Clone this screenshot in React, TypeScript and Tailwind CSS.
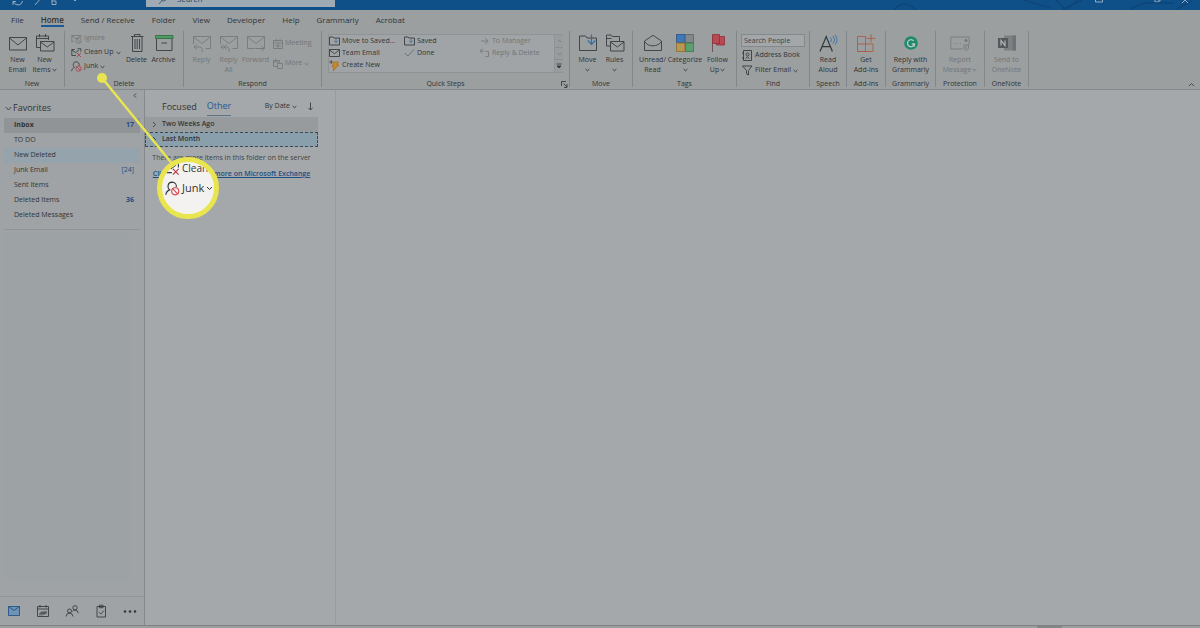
import { ReactNode } from "react";
import clsx from "clsx";

const INK = "#34383a";
const FAINT = "#747879";
const BLUE = "#1c4f84";
const RED = "#b3353f";

interface IconProps {
  w?: number;
  h?: number;
  color?: string;
  children: ReactNode;
}

function Icon({ w = 20, h = 20, color = INK, children }: IconProps) {
  return (
    <svg
      width={w}
      height={h}
      viewBox={`0 0 ${w} ${h}`}
      fill="none"
      stroke={color}
      strokeWidth={0.85}
      className="shrink-0"
      aria-hidden="true"
    >
      {children}
    </svg>
  );
}

function Caret() {
  return (
    <svg width="5" height="4" viewBox="0 0 5 4" fill="none" stroke="currentColor" strokeWidth="0.9" className="inline-block shrink-0" aria-hidden="true">
      <path d="M0.6 1 2.5 2.8 4.4 1" />
    </svg>
  );
}

const NewMail = () => (
  <Icon>
    <path d="M1.500 3.500h17v12.500h-17zM1.500 4 10 11l8.500-7" />
  </Icon>
);

const NewItems = () => (
  <Icon>
    <path d="M5.500 13.500h-4v-11.500h12v4M1.500 4.500h12M4.500 0v3M10.500 0v3M5.500 7.500h13.500v9.500h-13.500zM5.500 8l6.800 5 6.700-5" />
  </Icon>
);

const Trash = () => (
  <Icon>
    <path d="M4 2.500h12.500M7.500 2.500v-2h5.500v2M5.500 2.500v15h9.500v-15M8 5v10M10.200 5v10M12.500 5v10" />
  </Icon>
);

const ArchiveIcon = () => (
  <Icon>
    <path d="M2.500 5v11.500h15.500v-11.500M7.500 9h5.500" />
    <path d="M1.500 1.500h17.500v3h-17.500z" fill="#4f9a62" stroke="#2f6b45" />
  </Icon>
);

// Arrow count: 1 = reply, 2 = reply all, -1 = forward
function ReplyIcon({ arrows }: { arrows: number }) {
  return (
    <Icon color={FAINT}>
      <path d="M1.500 10v-7.500h17v12h-5M1.500 3 10 9.500 18.500 3" />
      {arrows === -1 ? (
        <path d="M1.500 10v4.500h8M10 14.500h8M15.500 12l2.800 2.500-2.800 2.700" />
      ) : (
        <path d="M4.500 10.500 2 13l2.500 2.500M2 13h6q2.500.2 2.200 5" />
      )}
      {arrows === 2 && <path d="M7.500 10.500 5 13l2.500 2.500" />}
    </Icon>
  );
}

const CalendarIcon = ({ arrow = false }: { arrow?: boolean }) => (
  <Icon w={10} h={10} color={FAINT}>
    {arrow ? (
      <path d="M4 7.500H.5v-6h6v2M.5 3h6M2.500 0v2M4.500 4.500h5v5h-5z" />
    ) : (
      <path d="M.5 1.500h9v8h-9zM.5 4h9M3 0v2.500M7 0v2.500M5 4v5.500M2 6.800h6" />
    )}
  </Icon>
);

const IgnoreIcon = () => (
  <Icon w={11} h={10} color={FAINT}>
    <path d="M3 7.500H.8V1.500h9v2.500M.8 2l4.200 2.800L9.500 2" />
    <circle cx="7.500" cy="6.800" r="2.600" />
    <path d="m5.700 5 3.600 3.600" />
  </Icon>
);

const CleanUpIcon = ({ size = 11 }: { size?: number }) => (
  <svg width={size} height={size} viewBox="0 0 11 11" fill="none" stroke={INK} strokeWidth="0.800" className="shrink-0" aria-hidden="true">
    <path d="M5 8.500H.8V2.500h3M.8 3l3.700 2.600L8 3M6.500 1.700h3.300v3" />
    <path d="m5.800 5.800 4.200 4.200m0-4.200L5.800 10" stroke={RED} />
  </svg>
);

const JunkIcon = ({ size = 11, red = RED }: { size?: number; red?: string }) => (
  <svg width={size} height={size} viewBox="0 0 11 11" fill="none" stroke={INK} strokeWidth="0.800" className="shrink-0" aria-hidden="true">
    <path d="M.6 10.200c.2-2 1.300-3.200 2.900-3.700C1.300 4.700 2 .9 5 .8c2.500 0 3.800 2 3.200 3.800" />
    <circle cx="7.500" cy="7.600" r="2.600" stroke={red} />
    <path d="m5.700 5.800 3.600 3.600" stroke={red} />
  </svg>
);

const FolderStep = () => (
  <Icon w={11} h={10}>
    <path d="M.5 1h3.500l1 1h5.500v7h-10z" />
    <path d="M7 2.500v4M5 4.700l2 2 2-2" stroke="#3f6f9c" />
  </Icon>
);

const MailStep = () => (
  <Icon w={11} h={10}>
    <path d="M.5 1.500h10v7h-10zM.5 2l5 3.700L10.500 2" />
  </Icon>
);

const BoltStep = () => (
  <Icon w={11} h={12}>
    <path d="M5 2h4.500L7.500 5H10L4 11l1.200-4.200H2.800z" fill="#c98a2c" stroke="#a1661a" strokeWidth="0.600" />
    <path d="M2.200 0v4M.2 2h4" stroke="#5c4526" />
  </Icon>
);

const CheckStep = () => (
  <Icon w={11} h={10} color="#55715f">
    <path d="m.8 5 3 3L10 1.500" />
  </Icon>
);

const ForwardStep = () => (
  <Icon w={11} h={10} color={FAINT}>
    <path d="M2 5h7M6 1.800 9.200 5 6 8.200" />
  </Icon>
);

const ReplyStep = () => (
  <Icon w={11} h={10} color={FAINT}>
    <path d="M3.500.8 1 3l2.500 2.300M1 3h4M6.500 3.500h3v5h-3" />
  </Icon>
);

const MoveIcon = () => (
  <Icon>
    <path d="M1.500 16.500V2h6l1.500 2h9.500v12.500z" />
    <path d="M13.500.5v9.500M9.800 6.500l3.700 3.800 3.800-3.800" stroke="#2f6da8" strokeWidth="1.200" />
  </Icon>
);

const RulesIcon = () => (
  <Icon>
    <path d="M5.500 12h-4V1h4.500l1.200 1.500h7.300v4.500M1.500 4.500h5" />
    <path d="M5.500 7.500h13.500v9.500h-13.500zM5.500 8l6.800 5 6.700-5" />
  </Icon>
);

const OpenMail = () => (
  <Icon>
    <path d="M1.500 7 10 1.300l8.500 5.700v9.500h-17zM1.500 7.500c2 3 5 4.300 8.500 4.300s6.500-1.300 8.500-4.300" />
  </Icon>
);

const CategorizeIcon = () => (
  <Icon>
    <path d="M1.500.5h8.500v8h-8.500z" fill="#3f78b4" stroke="#2c5688" />
    <path d="M10.500.5h8v8h-8z" fill="#83898b" stroke="#5f6567" />
    <path d="M1.500 9h8.500v8.500h-8.500z" fill="#b89653" stroke="#8f6f30" />
    <path d="M10.500 9h8v8.500h-8z" fill="#5da070" stroke="#3b7a50" />
  </Icon>
);

const FlagIcon = () => (
  <Icon>
    <path d="M4.500 1v17" stroke="#6c4448" />
    <path d="M4.500.5h7v9h-7z" fill="#b64a54" stroke="#92313c" />
    <path d="M11.500 2.500h5v8.500h-8v-1.500h3z" fill="#b64a54" stroke="#92313c" />
  </Icon>
);

const ReadAloud = () => (
  <Icon>
    <path d="m2 17.500 6.200-15 6.200 15M4 12.700h8.400" strokeWidth="1.200" />
    <path d="M12.500 3.500q2 2.200 0 4.600M14.800 2q3.400 3.800 0 7.600M17 .8q4.200 5 0 10" stroke="#2f6da8" />
  </Icon>
);

const AddinsIcon = () => (
  <Icon color="#ad5a3c">
    <path d="M1.500 2.500h8v15h-8zM1.500 10h15.500v7.500h-15.500M15 0v8.500M10.500 4.300h9" />
  </Icon>
);

const GrammarlyIcon = () => (
  <Icon>
    <circle cx="10" cy="9" r="6.800" fill="#1d8a6c" stroke="none" />
    <path d="M12.700 7A3.500 3.500 0 1 0 13.400 10h-2.600M13.400 9.500v3" stroke="#b8c9c4" strokeWidth="1.300" />
  </Icon>
);

const ReportIcon = () => (
  <Icon color={FAINT}>
    <path d="M13 15H.8V3h18.400v8" />
    <circle cx="16" cy="6.500" r="1.200" fill={FAINT} />
    <path d="M14 11h4.500v3q-.5 2-2.200 2.800-1.800-.8-2.300-2.800zM16.200 12v3" />
    <path d="M4 9.500h7" strokeDasharray="1 1" strokeWidth="0.600" />
  </Icon>
);

const OneNoteIcon = () => (
  <Icon>
    <path d="M7 1.500h12v15H7z" fill="#7c8082" stroke="none" />
    <path d="M15.500 1.500h3.500v15h-3.500z" fill="#6e7274" stroke="none" />
    <path d="M1 4h10v10H1z" fill="#54585a" stroke="none" />
    <path d="M4 11.500v-5l4 5v-5" stroke="#b4b8ba" strokeWidth="1.200" />
  </Icon>
);

interface GroupProps {
  title: string;
  className: string;
  children: ReactNode;
  launcher?: boolean;
}

function Group({ title, className, children, launcher = false }: GroupProps) {
  return (
    <section className={clsx("flex shrink-0 flex-col pt-[3px]", className)} aria-label={title}>
      <div className="flex flex-1 items-start">{children}</div>
      <div className="relative h-[10px] text-center leading-[14px]">
        {title}
        {launcher && (
          <button className="absolute right-px top-[4px]" aria-label={`${title} settings`}>
            <Icon w={7} h={7}>
              <path d="M.5 5V.5H5M2.500 2.500 6 6M6 3v3.500H3" />
            </Icon>
          </button>
        )}
      </div>
    </section>
  );
}

interface BigButtonProps {
  icon: ReactNode;
  lines: string[];
  caret?: boolean;
  disabled?: boolean;
  wide?: boolean;
}

function BigButton({ icon, lines, caret = false, disabled = false, wide = false }: BigButtonProps) {
  return (
    <button
      disabled={disabled}
      className={clsx(
        "flex shrink-0 flex-col items-center whitespace-nowrap leading-[10px]",
        wide ? "w-[38px]" : "w-[27px]",
        disabled && "text-[#717577]"
      )}
    >
      {icon}
      <span className="mt-px">{lines[0]}</span>
      <span className="flex h-[10px] items-center gap-px">
        {lines[1]}
        {caret && <Caret />}
      </span>
    </button>
  );
}

interface SmallButtonProps {
  icon: ReactNode;
  label: string;
  caret?: boolean;
  disabled?: boolean;
}

function SmallButton({ icon, label, caret = false, disabled = false }: SmallButtonProps) {
  return (
    <button
      disabled={disabled}
      className={clsx("flex h-[13px] items-center gap-[2px] whitespace-nowrap", disabled && "text-[#717577]")}
    >
      {icon}
      <span>{label}</span>
      {caret && <Caret />}
    </button>
  );
}

function TitleBar() {
  return (
    <header className="relative flex h-[10px] shrink-0 flex-col justify-end overflow-hidden bg-[#0f5088]">
      <svg className="absolute right-0 top-0" width="320" height="10" viewBox="0 0 320 10" fill="none" stroke="#0e467a" strokeWidth="1.500" aria-hidden="true">
        <path d="M14 10q10-12 22 0M144 0l26 8M176 0l10 10 12-10M202 0l-20 10M250 9l14-6h30M296 9l16-8" />
      </svg>
      <div className="flex h-[19px] shrink-0 items-start">
        <div className="flex w-[146px] items-center gap-[6px] pl-[11px]">
          <Icon w={14} h={16} color="#aebdc9">
            <path d="M2 10.500q2 4 6 3.500 3-.8 3.500-4M2 14v-3.500h3" />
          </Icon>
          <Icon w={12} h={16} color="#aebdc9">
            <path d="m4 14 7-8" />
          </Icon>
          <Icon w={12} h={16} color="#aebdc9">
            <path d="M3 9v4.500h4V10H3" />
          </Icon>
          <Icon w={12} h={16} color="#aebdc9">
            <path d="m6 8 2 2 2-2" />
          </Icon>
        </div>
        <label className="flex h-[16px] w-[189px] items-center bg-[#9fabb4]">
          <span className="flex w-[31px] justify-center">
            <Icon w={8} h={12} color="#35556f">
              <path d="m1 11 3-3.500" />
              <circle cx="5.500" cy="5.500" r="2.500" />
            </Icon>
          </span>
          <input aria-label="Search" placeholder="Search" className="w-[140px] bg-transparent text-[8px] leading-[12px] outline-none placeholder:text-[#24425c]" />
        </label>
        <div className="ml-auto flex h-[16px] items-center gap-[50px] pr-[39px]">
          <Icon w={8} h={16} color="#aebdc9">
            <path d="M.5 5v6h7V5M.5 8h7" />
          </Icon>
          <Icon w={8} h={16} color="#aebdc9">
            <path d="M2 5v6h4V5M6 9h2" />
          </Icon>
        </div>
      </div>
      <span className="absolute right-[11px] top-0">
        <Icon w={8} h={4} color="#aebdc9">
          <path d="m1 3 3-3 3 3" />
        </Icon>
      </span>
    </header>
  );
}

const TABS = ["File", "Home", "Send / Receive", "Folder", "View", "Developer", "Help", "Grammarly", "Acrobat"];

function Tabs() {
  return (
    <nav className="flex h-[20px] shrink-0 gap-[17px] bg-[#9b9fa0] pl-[11px] text-[8px] leading-[16px]">
      {TABS.map(tab => (
        <button
          key={tab}
          className={clsx("h-[17px] whitespace-nowrap pt-[2px]", tab === "Home" && "border-b-2 border-[#1c5a96] font-semibold")}
        >
          {tab}
        </button>
      ))}
    </nav>
  );
}

function QuickSteps() {
  return (
    <div className="ml-[6px] flex h-[39px] w-[235px] border border-[#8f9395] bg-[#a0a4a6]">
      <div className="grid flex-1 grid-flow-col grid-cols-[75px_75px_75px] grid-rows-[12px_12px_13px] items-center">
        <SmallButton icon={<FolderStep />} label="Move to Saved..." />
        <SmallButton icon={<MailStep />} label="Team Email" />
        <SmallButton icon={<BoltStep />} label="Create New" />
        <SmallButton icon={<FolderStep />} label="Saved" />
        <SmallButton icon={<CheckStep />} label="Done" />
        <span />
        <SmallButton icon={<ForwardStep />} label="To Manager" disabled />
        <SmallButton icon={<ReplyStep />} label="Reply & Delete" disabled />
      </div>
      <div className="flex w-[9px] shrink-0 flex-col divide-y divide-[#8a8e90] border-l border-[#8f9395] bg-[#989c9e]">
        <button className="flex flex-1 items-center justify-center" aria-label="Scroll up">
          <Icon w={5} h={4} color={FAINT}><path d="m1 3 1.500-1.500L4 3" /></Icon>
        </button>
        <button className="flex flex-1 items-center justify-center text-[#7b7f81]" aria-label="Scroll down">
          <Caret />
        </button>
        <button className="flex flex-1 items-center justify-center" aria-label="More quick steps">
          <Icon w={6} h={6}><path d="M.5 1h5M1 3l2 2 2-2z" fill={INK} /></Icon>
        </button>
      </div>
    </div>
  );
}

function Ribbon() {
  return (
    <div className="flex h-[60px] shrink-0 border-b border-[#85898b] bg-[#9b9fa0]">
      <div className="mb-[2px] mt-px flex divide-x divide-[#83878a] border-r border-[#83878a]">
        <Group title="New" className="w-[65px]">
          <div className="flex pl-[4px]">
            <BigButton icon={<NewMail />} lines={["New", "Email"]} />
            <BigButton icon={<NewItems />} lines={["New", "Items"]} caret />
          </div>
        </Group>
        <Group title="Delete" className="w-[119px]">
          <div className="-mt-[2px] flex w-[58px] flex-col gap-px pl-[6px]">
            <SmallButton icon={<IgnoreIcon />} label="Ignore" disabled />
            <SmallButton icon={<CleanUpIcon />} label="Clean Up" caret />
            <SmallButton icon={<JunkIcon />} label="Junk" caret />
          </div>
          <BigButton icon={<Trash />} lines={["Delete"]} />
          <BigButton icon={<ArchiveIcon />} lines={["Archive"]} />
        </Group>
        <Group title="Respond" className="w-[138px]">
          <div className="flex pl-[4px]">
            <BigButton icon={<ReplyIcon arrows={1} />} lines={["Reply"]} disabled />
            <BigButton icon={<ReplyIcon arrows={2} />} lines={["Reply", "All"]} disabled />
            <BigButton icon={<ReplyIcon arrows={-1} />} lines={["Forward"]} disabled />
          </div>
          <div className="flex flex-col gap-[7px] pl-[4px] pt-[3px]">
            <SmallButton icon={<CalendarIcon />} label="Meeting" disabled />
            <SmallButton icon={<CalendarIcon arrow />} label="More" caret disabled />
          </div>
        </Group>
        <Group title="Quick Steps" className="w-[248px]" launcher>
          <QuickSteps />
        </Group>
        <Group title="Move" className="w-[63px]">
          <div className="flex pl-[4px]">
            <BigButton icon={<MoveIcon />} lines={["Move"]} caret />
            <BigButton icon={<RulesIcon />} lines={["Rules"]} caret />
          </div>
        </Group>
        <Group title="Tags" className="w-[104px]">
          <div className="flex pl-[6px]">
            <BigButton icon={<OpenMail />} lines={["Unread/", "Read"]} />
            <BigButton icon={<CategorizeIcon />} lines={["Categorize"]} caret wide />
            <BigButton icon={<FlagIcon />} lines={["Follow", "Up"]} caret />
          </div>
        </Group>
        <Group title="Find" className="w-[73px]">
          <div className="flex flex-col gap-[2px] pl-[4px]">
            <input
              aria-label="Search People"
              placeholder="Search People"
              className="h-[13px] w-[64px] border border-[#85898b] bg-[#a3a7a9] px-[2px] text-[7px] leading-[11px] outline-none placeholder:text-[#404446]"
            />
            <SmallButton
              icon={
                <Icon w={12} h={11}>
                  <path d="M2.500.5h8v10h-8zM1 3h2M1 8h2M4.500 8.500q2-3 4 0" />
                  <circle cx="6.500" cy="4.500" r="1.500" />
                </Icon>
              }
              label="Address Book"
            />
            <SmallButton
              icon={
                <Icon w={12} h={11}>
                  <path d="M1.500 1h9.500L7.500 5.500V10l-2-1.200V5.500z" />
                </Icon>
              }
              label="Filter Email"
              caret
            />
          </div>
        </Group>
        <Group title="Speech" className="w-[37px]">
          <div className="flex flex-1 justify-center">
            <BigButton icon={<ReadAloud />} lines={["Read", "Aloud"]} />
          </div>
        </Group>
        <Group title="Add-ins" className="w-[39px]">
          <div className="flex flex-1 justify-center">
            <BigButton icon={<AddinsIcon />} lines={["Get", "Add-ins"]} />
          </div>
        </Group>
        <Group title="Grammarly" className="w-[50px]">
          <div className="flex flex-1 justify-center">
            <BigButton icon={<GrammarlyIcon />} lines={["Reply with", "Grammarly"]} wide />
          </div>
        </Group>
        <Group title="Protection" className="w-[49px]">
          <div className="flex flex-1 justify-center">
            <BigButton icon={<ReportIcon />} lines={["Report", "Message"]} caret disabled wide />
          </div>
        </Group>
        <Group title="OneNote" className="w-[43px]">
          <div className="flex flex-1 justify-center">
            <BigButton icon={<OneNoteIcon />} lines={["Send to", "OneNote"]} disabled wide />
          </div>
        </Group>
      </div>
      <button className="ml-auto self-end pb-px pr-[5px]" aria-label="Collapse ribbon">
        <Icon w={7} h={7}><path d="M1 5l2.500-2.500L6 5" /></Icon>
      </button>
    </div>
  );
}

const FOLDERS = [
  { name: "Inbox", count: "17", active: true },
  { name: "TO DO" },
  { name: "New Deleted", hover: true },
  { name: "Junk Email", count: "[24]", plain: true },
  { name: "Sent Items" },
  { name: "Deleted Items", count: "36" },
  { name: "Deleted Messages" },
];

function Sidebar() {
  return (
    <aside className="flex w-[145px] shrink-0 flex-col border-r border-[#85898b] bg-[#9fa3a5]">
      <button className="mr-[6px] mt-[2px] self-end" aria-label="Collapse folder pane">
        <Icon w={6} h={7}><path d="M4 1.500 2 3.500l2 2" /></Icon>
      </button>
      <button className="flex h-[18px] items-center gap-px pl-[5px] text-[9px]">
        <Icon w={7} h={7}><path d="M.8 2l2.700 3 2.700-3" /></Icon>
        Favorites
      </button>
      <ul className="mx-[4px] mt-px border-b border-[#8f9395] pb-[6px]">
        {FOLDERS.map(f => (
          <li key={f.name}>
            <button
              className={clsx(
                "flex h-[15px] w-full items-center justify-between pl-[10px] pr-[6px]",
                f.active && "bg-[#909496]",
                f.hover && "bg-[#94a3ac]"
              )}
            >
              <span className={clsx(f.active && "font-bold")}>{f.name}</span>
              <span className={clsx("text-[#1c4f84]", !f.plain && "font-bold")}>{f.count}</span>
            </button>
          </li>
        ))}
      </ul>
      <div className="mb-[16px] ml-[4px] mr-[14px] mt-[4px] flex-1 bg-[#9da2a4]" />
      <div className="flex h-[29px] items-center gap-[15px] border-t border-[#93979a] pb-px pl-[7px]">
        <button aria-label="Mail">
          <Icon w={14} h={14} color={BLUE}>
            <path d="M1.500 2.500h11v9h-11z" fill="#6f93b5" />
            <path d="m1.500 2.500 5.500 4 5.500-4" />
          </Icon>
        </button>
        <button aria-label="Calendar">
          <Icon w={14} h={14}>
            <path d="M1.500 2.500h11v10h-11zM1.500 5h11M4 1v2.500M10 1v2.500M4 9v2.500M6 7.500v4M8 7v4M10 7v2.500M4 9h6.500" />
          </Icon>
        </button>
        <button aria-label="People">
          <Icon w={14} h={14}>
            <circle cx="4.500" cy="7" r="2" />
            <circle cx="10" cy="3.800" r="2.200" />
            <path d="M1 12.500q.5-3.500 3.500-3.500T8 12.500M7.500 7.500Q8.500 6 10 6q2.800 0 3.300 3.200" />
          </Icon>
        </button>
        <button aria-label="Tasks">
          <Icon w={14} h={14}>
            <path d="M3 2.500h8.500v10.500h-8.500zM5.500 1.200h3.500v2.500h-3.500zM5 8.300l1.800 1.800L10 6.500" />
          </Icon>
        </button>
        <button aria-label="More">
          <Icon w={14} h={14}>
            <g fill={INK} stroke="none">
              <circle cx="2" cy="7.500" r="1.300" />
              <circle cx="7" cy="7.500" r="1.300" />
              <circle cx="12" cy="7.500" r="1.300" />
            </g>
          </Icon>
        </button>
      </div>
    </aside>
  );
}

function MessageList() {
  return (
    <section className="w-[191px] shrink-0 border-r border-[#989c9e]">
      <div className="flex h-[27px] items-end pb-px pl-[17px] pr-[21px]">
        <button className="h-[19px] text-[9px] leading-[18px]">Focused</button>
        <button className="ml-[10px] h-[19px] border-b border-[#5f7284] text-[9px] leading-[18px] text-[#1c5a96]">Other</button>
        <button className="ml-auto flex h-[19px] items-center gap-[2px]">
          By Date <Caret />
        </button>
        <button className="ml-[10px] flex h-[19px] items-center" aria-label="Sort descending">
          <Icon w={7} h={9}><path d="M3.500.5v7.500M1.300 5.800 3.500 8l2.200-2.200" /></Icon>
        </button>
      </div>
      <button className="flex h-[15px] w-[173px] items-center gap-[5px] bg-[#979b9d] pl-[6px] font-semibold">
        <Icon w={6} h={7}><path d="m2 1 2.500 2.500L2 6" /></Icon>
        Two Weeks Ago
      </button>
      <button className="flex h-[15px] w-[173px] items-center gap-[5px] border border-dashed border-[#3c4a55] bg-[#8a9fac] pl-[5px] font-semibold">
        <Icon w={6} h={7}><path d="m2 1 2.500 2.500L2 6" /></Icon>
        Last Month
      </button>
      <div className="flex w-[173px] flex-col items-center gap-[6px] whitespace-nowrap pt-[6px] leading-[10px]">
        <p className="text-[#3f4446]">There are more items in this folder on the server</p>
        <a href="#more" className="font-semibold text-[#1c4f84] underline">Click here to view more on Microsoft Exchange</a>
      </div>
    </section>
  );
}

// Magnifier bubble over the Junk command, with its leader line
function Callout() {
  return (
    <>
      <svg className="pointer-events-none absolute left-[96px] top-[72px]" width="80" height="96" viewBox="0 0 80 96" aria-hidden="true">
        <path d="M6 6 78 94" stroke="#e8e452" strokeWidth="2.500" />
        <circle cx="6" cy="6" r="5" fill="#e8e452" />
      </svg>
      <div className="absolute left-[157px] top-[157px] size-[62px] overflow-hidden rounded-full border-[5px] border-[#e9e54e] bg-[#f3f2f1] text-[#333]">
        <div className="flex w-[64px] flex-col pl-[3px]">
          <div className="flex h-[13px] items-center gap-[2px] text-[10px] leading-[13px]">
            <CleanUpIcon size={15} />
            Clean
          </div>
          <div className="flex h-[27px] items-center gap-[2px] text-[11px]">
            <JunkIcon size={15} red="#d8434e" />
            Junk
            <svg width="7" height="5" viewBox="0 0 7 5" fill="none" stroke="currentColor" aria-hidden="true">
              <path d="m1 1 2.500 2.500L6 1" />
            </svg>
          </div>
        </div>
      </div>
    </>
  );
}

export default function App() {
  return (
    <div className="relative flex h-screen min-h-[320px] flex-col overflow-hidden bg-[#a4a8aa] font-['Open_Sans',sans-serif] text-[7px] text-[#303436]">
      <TitleBar />
      <Tabs />
      <Ribbon />
      <main className="flex min-h-0 flex-1">
        <Sidebar />
        <MessageList />
        <div className="flex-1" />
      </main>
      <footer className="flex h-[3px] shrink-0 border-t border-[#7f8385] bg-[#9b9fa0]">
        <span className="ml-auto mr-[138px] w-[25px] bg-[#858585]" />
      </footer>
      <Callout />
    </div>
  );
}
